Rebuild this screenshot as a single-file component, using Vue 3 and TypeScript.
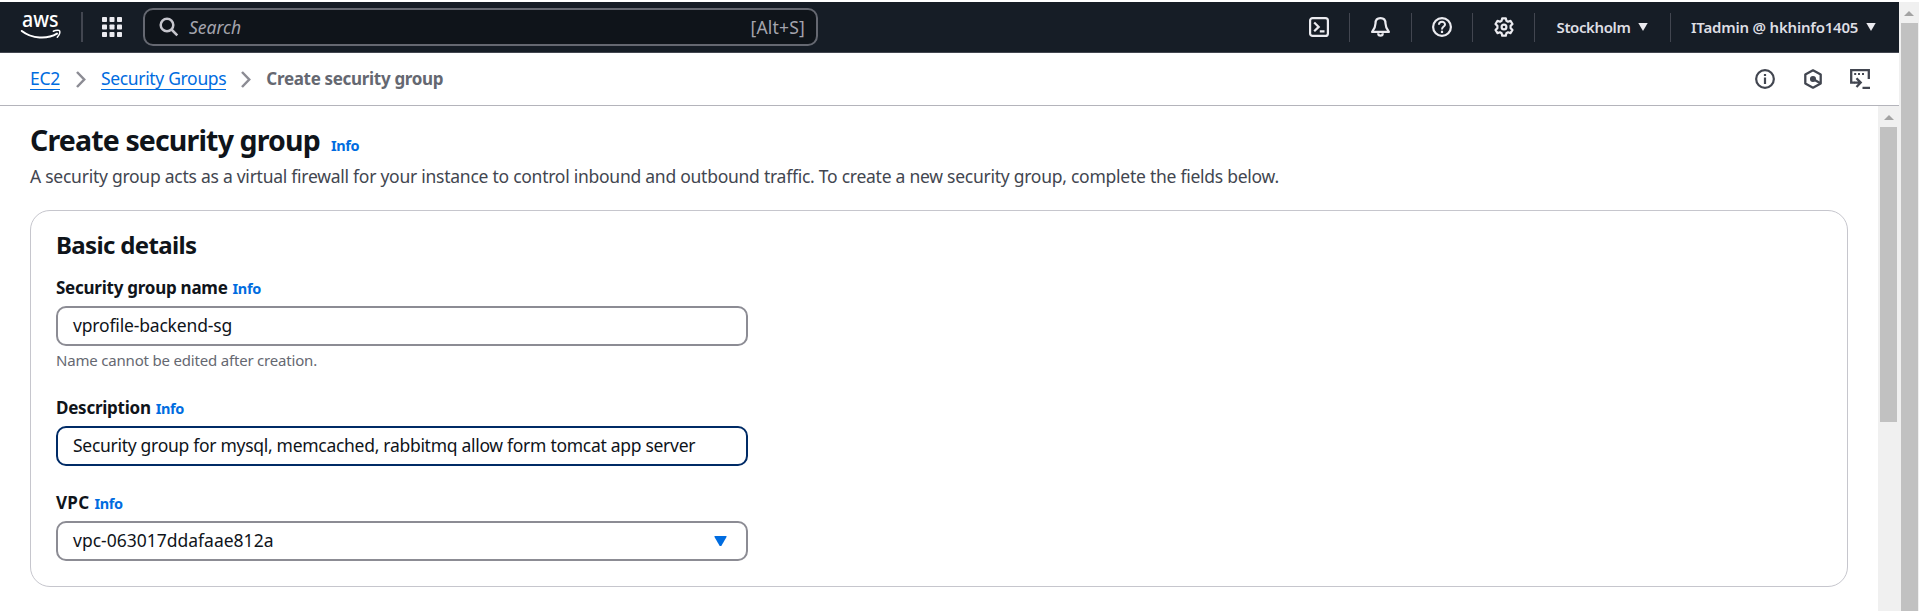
<script setup lang="ts">
import { ref } from 'vue'

interface Crumb { label: string; cls: string; current?: boolean }

const crumbs: Crumb[] = [
  { label: 'EC2', cls: 'crumb-service' },
  { label: 'Security Groups', cls: 'crumb-list' },
  { label: 'Create security group', cls: 'crumb-current', current: true },
]

const groupName = ref('vprofile-backend-sg')
const description = ref('Security group for mysql, memcached, rabbitmq allow form tomcat app server')
const vpc = ref('vpc-063017ddafaae812a')
</script>

<template>
  <div class="window">
    <div class="page">
      <header class="topbar">
        <a class="logo">
          <svg width="42" height="44" viewBox="0 -8 42 44">
            <text x="2" y="14" textLength="36.500" lengthAdjust="spacingAndGlyphs" class="logo-text">aws</text>
            <path d="M1.8 18C12 26 27.500 26.400 37 20.700" fill="none" stroke="#fff" stroke-width="2.100" stroke-linecap="round" />
            <path d="M33.300 18.200C36 17 39.300 17.100 39.700 18C40.100 19.300 39.100 22.200 37.300 24.200" fill="none" stroke="#fff" stroke-width="1.500" stroke-linecap="round" />
          </svg>
        </a>
        <span class="bar-rule"></span>
        <svg class="services" width="20" height="20" viewBox="0 0 20 20" fill="#ebebf0">
          <template v-for="r in 3" :key="r">
            <rect v-for="c in 3" :key="c" :x="(c - 1) * 7.500" :y="(r - 1) * 7.500" width="5" height="5" rx="0.800" />
          </template>
        </svg>
        <div class="search">
          <svg width="20" height="20" viewBox="0 0 20 20" fill="none" stroke="#c6c6cd" stroke-width="2.500">
            <circle cx="8" cy="8" r="6.300" />
            <path d="M12.500 12.500L18.300 18.300" />
          </svg>
          <span class="search-hint">Search</span>
          <span class="search-key">[Alt+S]</span>
        </div>
        <nav class="tools">
          <span class="tool">
            <svg width="20" height="20" viewBox="0 0 20 20" fill="none" stroke="#ebebf0" stroke-width="2.200">
              <rect x="1.100" y="1.100" width="17.800" height="17.800" rx="2.500" />
              <path d="M5.200 5.500L9.700 9.900L5.200 14.300M10.800 14.300H15.500" />
            </svg>
          </span>
          <span class="tool">
            <svg width="20" height="20" viewBox="0 0 20 20" fill="none" stroke="#ebebf0" stroke-width="2.200" stroke-linejoin="round">
              <path d="M9.500 1.200C6.200 1.200 4.500 3.600 4.500 6.500C4.500 10.500 3.200 12.300 1.100 14.900H17.900C15.800 12.300 14.500 10.500 14.500 6.500C14.500 3.600 12.800 1.200 9.500 1.200Z" />
              <path d="M7.200 16.200C7.200 19.500 11.800 19.500 11.800 16.200" />
            </svg>
          </span>
          <span class="tool">
            <svg width="20" height="20" viewBox="0 0 20 20" fill="none" stroke="#ebebf0" stroke-width="2.200">
              <circle cx="10" cy="10" r="8.900" />
              <path d="M6.900 7.700C7.100 3.900 13 4 13 7.400C13 9.600 10 9.700 10 12.500" stroke-width="2" />
              <path d="M10 13.700V16" />
            </svg>
          </span>
          <span class="tool">
            <svg width="20" height="20" viewBox="0 0 20 20" fill="none" stroke="#ebebf0" stroke-width="2.200" stroke-linejoin="round">
              <path d="M8.200 1.300H11.800L12.400 3.800L14 4.700L16.500 3.900L18.500 7L16.600 8.900V11.100L18.500 13L16.500 16.100L14 15.300L12.400 16.200L11.800 18.700H8.200L7.600 16.200L6 15.300L3.500 16.100L1.500 13L3.400 11.100V8.900L1.500 7L3.500 3.900L6 4.700L7.600 3.800Z" />
              <circle cx="10" cy="10" r="2.400" />
            </svg>
          </span>
          <span class="tool region">
            <span class="region-name">Stockholm</span>
            <svg width="10" height="8" viewBox="0 0 10 8"><path d="M0.300 0H9.700L5 8Z" fill="#ebebf0" /></svg>
          </span>
          <span class="account">
            <span class="account-name">ITadmin @ hkhinfo1405</span>
            <svg width="10" height="8" viewBox="0 0 10 8"><path d="M0.300 0H9.700L5 8Z" fill="#ebebf0" /></svg>
          </span>
        </nav>
      </header>

      <div class="crumb-bar">
        <template v-for="(c, i) in crumbs" :key="c.label">
          <svg v-if="i > 0" class="chevron" width="10" height="17" viewBox="0 0 10 17" fill="none" stroke="#8c8c94" stroke-width="2.500">
            <path d="M1 1L8.200 8.500L1 16" />
          </svg>
          <span :class="['crumb', c.cls, { current: c.current }]">{{ c.label }}</span>
        </template>
        <div class="page-tools">
          <svg width="20" height="20" viewBox="0 0 20 20" fill="none" stroke="#424650" stroke-width="2.200">
            <circle cx="10" cy="10" r="8.850" />
            <path d="M10 5V7M10 8.500V15" />
          </svg>
          <svg width="20" height="20" viewBox="0 0 20 20" fill="none" stroke="#424650" stroke-width="2.300" stroke-linejoin="round">
            <path d="M10 1.300L17.700 5.500V14.500L10 18.700L2.300 14.500V5.500Z" />
            <path d="M10 10L17 14" />
            <circle cx="10" cy="10" r="1.900" fill="#424650" />
          </svg>
          <svg width="20" height="20" viewBox="0 0 20 20" fill="none" stroke="#424650" stroke-width="2.300">
            <path d="M4.500 13.600H1.200V1.200H18.800V10" />
            <path d="M4.200 5H6.200M8 5H10M12 5H14" stroke-width="2" />
            <path d="M4 13.600H10.500M6.500 9.200L10.700 13.600L6.500 18M12.500 18.800H20" />
          </svg>
        </div>
      </div>

      <div class="body">
        <main class="content">
          <div class="heading">
            <h1>Create security group</h1>
            <a class="info">Info</a>
          </div>
          <p class="lead">A security group acts as a virtual firewall for your instance to control inbound and outbound traffic. To create a new security group, complete the fields below.</p>

          <section class="card">
            <h2>Basic details</h2>
            <div class="field">
              <div class="label"><span class="label-name">Security group name</span><a class="info">Info</a></div>
              <div class="control value-name">{{ groupName }}</div>
              <div class="hint">Name cannot be edited after creation.</div>
            </div>
            <div class="field">
              <div class="label"><span>Description</span><a class="info">Info</a></div>
              <div class="control focused value-description">{{ description }}</div>
            </div>
            <div class="field">
              <div class="label"><span class="label-vpc">VPC</span><a class="info">Info</a></div>
              <div class="control select">
                <span>{{ vpc }}</span>
                <svg class="caret" width="13" height="10" viewBox="0 0 13 10"><path d="M0.500 0H12.500V1L7.300 10H5.700L0.500 1Z" fill="#006ce0" /></svg>
              </div>
            </div>
          </section>
        </main>
        <div class="scrollbar inner">
          <svg width="10" height="5" viewBox="0 0 10 5"><path d="M0 5L5 0L10 5Z" fill="#a3a3a3" /></svg>
          <span class="thumb"></span>
        </div>
      </div>
    </div>
    <div class="scrollbar outer">
      <svg width="10" height="5" viewBox="0 0 10 5"><path d="M0 5L5 0L10 5Z" fill="#a3a3a3" /></svg>
      <span class="thumb"></span>
    </div>
  </div>
</template>

<style scoped>
.window {
  display: flex;
  box-sizing: border-box;
  width: 100%;
  height: 611px;
  padding-top: 2px;
  background: #fff;
  color: #0f141a;
  font-family: "Noto Sans", sans-serif;
  font-size: 17.5px;
  line-height: 24px;
  white-space: nowrap;
  overflow: hidden;
}
svg { display: block; flex: none; }
.page { flex: 1; min-width: 0; display: flex; flex-direction: column; }

.topbar {
  display: flex;
  align-items: center;
  box-sizing: border-box;
  height: 51px;
  flex: none;
  padding-left: 20px;
  background: #161d26;
  border-bottom: 1px solid #424650;
}
.logo svg { overflow: visible; }
.logo-text { font-family: "Noto Sans", sans-serif; font-size: 22px; font-weight: 500; fill: #fff; }
.bar-rule { width: 2px; height: 30px; margin: 0 19px; background: #424650; }
.search {
  display: flex;
  align-items: center;
  box-sizing: border-box;
  width: 675px;
  height: 38px;
  margin-left: 21px;
  padding: 0 11px 0 14px;
  border: 2px solid #656871;
  border-radius: 10px;
  background: #0f141a;
  color: #a4a4ad;
}
.search-hint { margin-left: 10px; font-style: italic; }
.search-key { margin-left: auto; letter-spacing: 0.2px; }
.tools { display: flex; align-items: center; margin-left: auto; color: #dedee3; font-size: 15px; font-weight: 600; }
.tool {
  display: flex;
  align-items: center;
  justify-content: center;
  box-sizing: border-box;
  width: 61.75px;
  height: 29px;
  padding-left: 1px;
  border-right: 1px solid #424650;
}
.region { width: 136px; padding: 0; gap: 8px; }
.region-name { letter-spacing: -0.4px; }
.account { display: flex; align-items: center; box-sizing: border-box; width: 228px; padding-left: 20px; gap: 8px; }
.account-name { letter-spacing: -0.2px; }

.crumb-bar {
  display: flex;
  align-items: center;
  box-sizing: border-box;
  height: 53px;
  flex: none;
  padding: 0 29px 0 30px;
  border-bottom: 1px solid #b4b4bb;
}
.crumb { height: 23px; margin-bottom: 2px; line-height: 23px; box-sizing: border-box; color: #006ce0; border-bottom: 1px solid #006ce0; }
.crumb-service { letter-spacing: -0.3px; }
.crumb-list { letter-spacing: -0.33px; }
.crumb.current { color: #656871; border-bottom-color: transparent; font-size: 17px; font-weight: 700; letter-spacing: -0.32px; }
.chevron { margin: 0 15px; }
.crumb-service + .chevron { margin-left: 16px; }
.page-tools { display: flex; gap: 27.5px; margin-left: auto; }

.body { display: flex; flex: 1; min-height: 0; }
.content { flex: 1; min-width: 0; padding: 16px 30px 0; }
.heading { display: flex; align-items: baseline; gap: 11px; height: 36px; }
h1 { margin: 0; font-size: 28.5px; line-height: 36px; font-weight: 700; letter-spacing: -0.85px; }
.info { color: #006ce0; font-size: 14.5px; font-weight: 700; letter-spacing: -0.35px; }
.lead { margin: 6px 0 22px; color: #424650; letter-spacing: -0.257px; }
.card {
  box-sizing: border-box;
  height: 377px;
  padding: 19px 25px 0;
  border: 1px solid #c6c6cd;
  border-radius: 20px;
}
h2 { margin: 0 0 16px; font-size: 24px; line-height: 30px; font-weight: 700; letter-spacing: -0.65px; }
.field { width: 692px; margin-bottom: 25px; }
.label { display: flex; align-items: baseline; gap: 5px; height: 24px; margin-bottom: 6px; font-size: 17px; font-weight: 700; letter-spacing: -0.25px; }
.label-vpc { letter-spacing: 0.3px; }
.control {
  display: flex;
  align-items: center;
  box-sizing: border-box;
  height: 40px;
  padding: 0 19px 2px 15px;
  border: 2px solid #8c8c94;
  border-radius: 10px;
  background: #fff;
}
.focused { border-color: #002b66; }
.value-name { letter-spacing: -0.17px; }
.value-description { letter-spacing: -0.29px; }
.select { justify-content: space-between; }
.caret { margin-top: 2px; }
.hint { margin: 4px 0 26px; color: #656871; font-size: 15px; line-height: 20px; letter-spacing: -0.19px; }

.scrollbar { display: flex; flex-direction: column; align-items: center; flex: none; box-sizing: border-box; background: #f0f0f0; }
.thumb { width: 17px; background: #c1c1c1; }
.inner { width: 21px; padding-top: 9px; }
.inner .thumb { height: 295px; margin-top: 7px; }
.outer { width: 20px; padding-top: 9px; }
.outer .thumb { flex: 1; margin-top: 7px; }
</style>

<style>
body { overflow: hidden; }
</style>
